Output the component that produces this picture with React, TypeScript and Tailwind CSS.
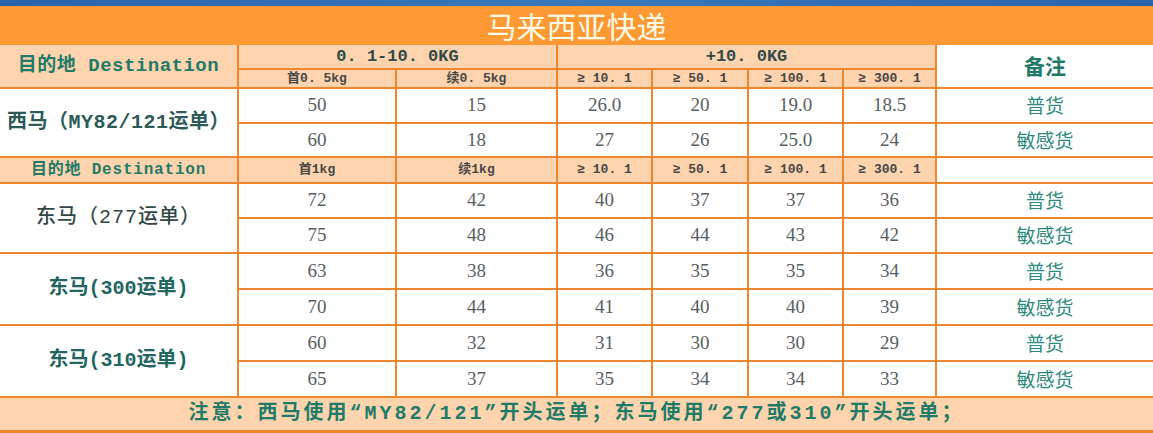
import React from "react";

const mono = "font-['Liberation_Mono','Noto_Sans_CJK_SC',monospace]";
const headCell = `bg-[#fdd4ae] flex items-center justify-center ${mono}`;
const subHead = `${headCell} text-[13px] font-bold text-[#464646]`;
const dataCell = "bg-white flex items-center justify-center text-[19px] text-[#56615f] font-['Liberation_Serif',serif]";
const noteCell = "bg-white flex items-center justify-center text-[19px] text-[#2e8a7c] font-['Noto_Sans_CJK_SC',sans-serif]";

const tiers = ["≥ 10. 1", "≥ 50. 1", "≥ 100. 1", "≥ 300. 1"];

const groups = [
  {
    name: "西马（MY82/121运单）",
    style: "text-[20px] font-bold text-[#2d5a57] tracking-[0.5px]",
    rows: [
      { v: ["50", "15", "26.0", "20", "19.0", "18.5"], note: "普货" },
      { v: ["60", "18", "27", "26", "25.0", "24"], note: "敏感货" },
    ],
  },
  {
    name: "东马（277运单）",
    style: "text-[20px] font-medium text-[#334846] tracking-[1px]",
    rows: [
      { v: ["72", "42", "40", "37", "37", "36"], note: "普货" },
      { v: ["75", "48", "46", "44", "43", "42"], note: "敏感货" },
    ],
  },
  {
    name: "东马(300运单)",
    style: "text-[20px] font-bold text-[#22665f]",
    rows: [
      { v: ["63", "38", "36", "35", "35", "34"], note: "普货" },
      { v: ["70", "44", "41", "40", "40", "39"], note: "敏感货" },
    ],
  },
  {
    name: "东马(310运单)",
    style: "text-[20px] font-bold text-[#22665f]",
    rows: [
      { v: ["60", "32", "31", "30", "30", "29"], note: "普货" },
      { v: ["65", "37", "35", "34", "34", "33"], note: "敏感货" },
    ],
  },
];

function Group({ g }: { g: (typeof groups)[number] }) {
  return (
    <>
      <div className={`bg-white row-span-2 flex items-center justify-center ${mono} ${g.style}`}>
        {g.name}
      </div>
      {g.rows.map((r, i) => (
        <React.Fragment key={i}>
          {r.v.map((x, j) => (
            <div key={j} className={dataCell}>{x}</div>
          ))}
          <div className={noteCell}>{r.note}</div>
        </React.Fragment>
      ))}
    </>
  );
}

export default function App() {
  return (
    <div className="w-[1153px] h-[433px] bg-white overflow-hidden">
      <div className="h-[6px] bg-gradient-to-r from-[#2b63a8] via-[#3a78c0] to-[#2b63a8]" />
      <div className="h-[39px] bg-[#fe9934] flex items-center justify-center text-[#fffbe8] text-[30px] font-['Noto_Sans_CJK_SC',sans-serif]">
        马来西亚快递
      </div>
      <div className="grid bg-[#ef852c] gap-[2px] pb-[3px] grid-cols-[237px_156px_159px_93px_94px_93px_91px_216px] grid-rows-[23px_17px_33px_32px_24px_33px_33px_34px_34px_34px_34px_32px]">
        {/* header block */}
        <div className={`${headCell} row-span-2 text-[19px] font-bold text-[#1f7a68] tracking-[0.5px]`}>
          目的地 Destination
        </div>
        <div className={`${headCell} col-span-2 text-[17px] font-bold text-[#2f4a48]`}>0. 1-10. 0KG</div>
        <div className={`${headCell} col-span-4 text-[17px] font-bold text-[#2f4a48]`}>+10. 0KG</div>
        <div className="bg-white row-span-2 flex items-center justify-center text-[21px] font-bold text-[#1f7a68] font-['Noto_Sans_CJK_SC',sans-serif]">
          备注
        </div>
        <div className={subHead}>首0. 5kg</div>
        <div className={subHead}>续0. 5kg</div>
        {tiers.map((t) => (
          <div key={t} className={subHead}>{t}</div>
        ))}

        <Group g={groups[0]} />

        {/* second header */}
        <div className={`${headCell} text-[16px] font-bold text-[#1f7a68] tracking-[0.8px]`}>
          目的地 Destination
        </div>
        <div className={subHead}>首1kg</div>
        <div className={subHead}>续1kg</div>
        {tiers.map((t) => (
          <div key={t + "b"} className={subHead}>{t}</div>
        ))}
        <div className="bg-white" />

        <Group g={groups[1]} />
        <Group g={groups[2]} />
        <Group g={groups[3]} />

        <div className={`${headCell} col-span-8 text-[20px] font-bold text-[#1f7a68] tracking-[3px]`}>
          注意：西马使用“MY82/121”开头运单；东马使用“277或310”开头运单；
        </div>
      </div>
    </div>
  );
}
